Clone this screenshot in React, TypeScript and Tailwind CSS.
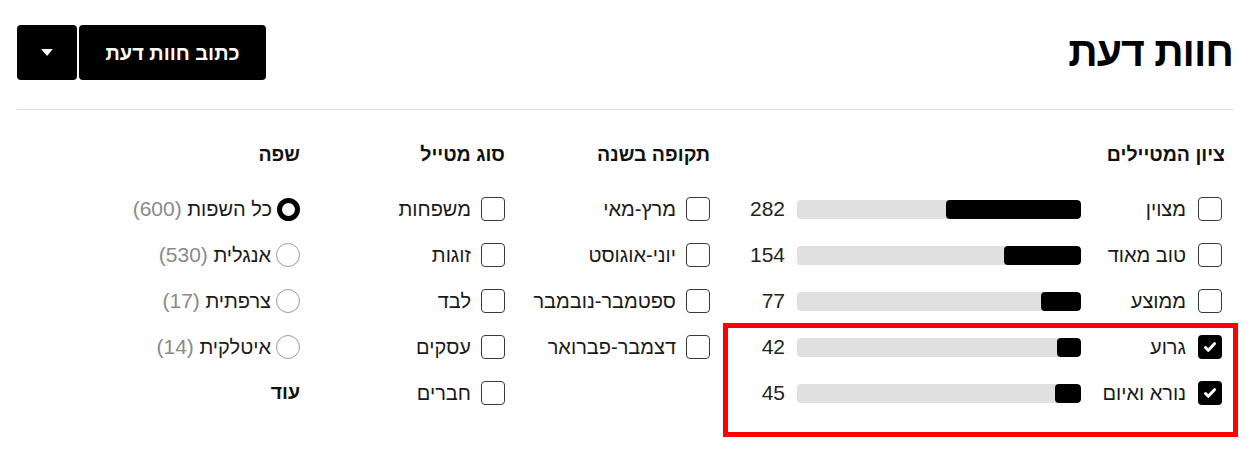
import React from 'react';

interface RatingRow {
    label: string;
    count: number;
    fill: number;
    checked: boolean;
}

const ratings: RatingRow[] = [
    { label: 'מצוין', count: 282, fill: 47.5, checked: false },
    { label: 'טוב מאוד', count: 154, fill: 27, checked: false },
    { label: 'ממוצע', count: 77, fill: 14, checked: false },
    { label: 'גרוע', count: 42, fill: 8.5, checked: true },
    { label: 'נורא ואיום', count: 45, fill: 9.2, checked: true },
];

const seasons = ['מרץ-מאי', 'יוני-אוגוסט', 'ספטמבר-נובמבר', 'דצמבר-פברואר'];
const travelerTypes = ['משפחות', 'זוגות', 'לבד', 'עסקים', 'חברים'];
const languages = [
    { label: 'כל השפות', count: 600, selected: true },
    { label: 'אנגלית', count: 530, selected: false },
    { label: 'צרפתית', count: 17, selected: false },
    { label: 'איטלקית', count: 14, selected: false },
];

const Checkbox: React.FC<{ checked?: boolean }> = ({ checked }) =>
    checked ? (
        <span className="w-6 h-6 rounded-[4px] bg-black flex items-center justify-center shrink-0">
            <svg viewBox="0 0 16 16" className="w-[16px] h-[16px]" fill="none" stroke="white" strokeWidth="3" strokeLinecap="round" strokeLinejoin="round">
                <path d="M3.5 8.5l2.8 2.8 6.2-6.6" />
            </svg>
        </span>
    ) : (
        <span className="w-6 h-6 rounded-[4px] border-[1.5px] border-[#3a3a3a] bg-white shrink-0" />
    );

const Radio: React.FC<{ selected?: boolean }> = ({ selected }) =>
    selected ? (
        <span className="w-[23px] h-[23px] rounded-full border-[5px] border-black shrink-0" />
    ) : (
        <span className="w-[24px] h-[24px] rounded-full border border-[#9a9a9a] shrink-0" />
    );

const ColumnTitle: React.FC<{ children: React.ReactNode }> = ({ children }) => (
    <div className="h-5 leading-5 text-[19.5px] font-bold text-[#111] mb-[22px]">{children}</div>
);

export default function App() {
    return (
        <div dir="rtl" className="relative w-[1250px] h-[463px] bg-white px-[17px] font-['Liberation_Sans',Arial,sans-serif] text-[#1a1a1a]">
            <header className="flex justify-between items-center pt-[25px] pb-[29px] border-b border-[#dcdcdc]">
                <h1 className="text-[41px] leading-[55px] font-bold text-black tracking-tight">חוות דעת</h1>
                <div className="flex items-center gap-[2px] h-[55px]">
                    <button className="h-[55px] w-[187px] rounded-[4px] bg-black text-white text-[20px] font-bold">כתוב חוות דעת</button>
                    <button className="h-[55px] w-[60px] rounded-[4px] bg-black flex items-center justify-center" aria-label="עוד אפשרויות">
                        <svg viewBox="0 0 10 6" className="w-[12px] h-[7px]" fill="white">
                            <path d="M0 0h10L5 6z" />
                        </svg>
                    </button>
                </div>
            </header>

            <div className="grid grid-cols-[515px_205px_205px_1fr] pr-[8px] pt-[34px]">
                <section>
                    <ColumnTitle>ציון המטיילים</ColumnTitle>
                    {ratings.map((r) => (
                        <div key={r.label} className="h-[46px] flex items-center pr-[3px]">
                            <Checkbox checked={r.checked} />
                            <span className="w-[105px] mr-[12px] text-[20px]">{r.label}</span>
                            <div className="w-[284px] h-[19px] rounded-[4px] bg-[#e0e0e0] overflow-hidden flex">
                                <div className="h-full bg-black rounded-[4px]" style={{ width: `${r.fill}%` }} />
                            </div>
                            <span className="mr-[12px] text-[21px] text-[#222]">{r.count}</span>
                        </div>
                    ))}
                </section>

                <section>
                    <ColumnTitle>תקופה בשנה</ColumnTitle>
                    {seasons.map((s) => (
                        <div key={s} className="h-[46px] flex items-center gap-[10px]">
                            <Checkbox />
                            <span className="text-[20px]">{s}</span>
                        </div>
                    ))}
                </section>

                <section>
                    <ColumnTitle>סוג מטייל</ColumnTitle>
                    {travelerTypes.map((t) => (
                        <div key={t} className="h-[46px] flex items-center gap-[10px]">
                            <Checkbox />
                            <span className="text-[20px]">{t}</span>
                        </div>
                    ))}
                </section>

                <section>
                    <ColumnTitle>שפה</ColumnTitle>
                    {languages.map((l) => (
                        <div key={l.label} className="h-[46px] flex items-center gap-[5px]">
                            <Radio selected={l.selected} />
                            <span className="text-[20px]">
                                {l.label} <span className="text-[21px] text-[#8a8a8a]">({l.count})</span>
                            </span>
                        </div>
                    ))}
                    <div className="h-[46px] flex items-center text-[19.5px] font-bold text-[#111]">עוד</div>
                </section>
            </div>

            <div className="absolute left-[723px] top-[323px] w-[515px] h-[114px] border-[5px] border-[#ff0000] pointer-events-none" />
        </div>
    );
}
